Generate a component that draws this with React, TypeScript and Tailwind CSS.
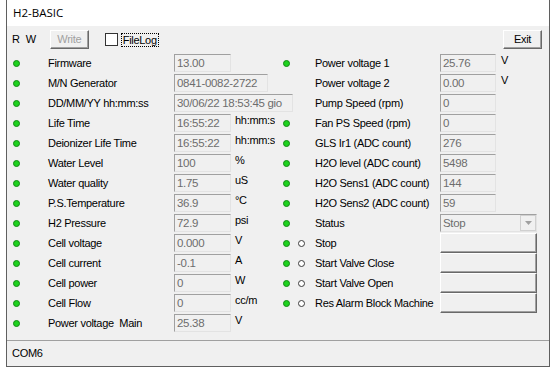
import React from 'react';

type LeftRow = { label: string; value: string; unit?: string; w?: number };
type RightRow = {
  label: string;
  value?: string;
  unit?: string;
  led?: boolean;
  hollow?: boolean;
  kind?: 'input' | 'combo' | 'button';
};

const leftRows: LeftRow[] = [
  { label: 'Firmware', value: '13.00' },
  { label: 'M/N Generator', value: '0841-0082-2722', w: 94 },
  { label: 'DD/MM/YY hh:mm:ss', value: '30/06/22 18:53:45 gio', w: 119 },
  { label: 'Life Time', value: '16:55:22', unit: 'hh:mm:ss' },
  { label: 'Deionizer Life Time', value: '16:55:22', unit: 'hh:mm:ss' },
  { label: 'Water Level', value: '100', unit: '%' },
  { label: 'Water quality', value: '1.75', unit: 'uS' },
  { label: 'P.S.Temperature', value: '36.9', unit: '°C' },
  { label: 'H2 Pressure', value: '72.9', unit: 'psi' },
  { label: 'Cell voltage', value: '0.000', unit: 'V' },
  { label: 'Cell current', value: '-0.1', unit: 'A' },
  { label: 'Cell power', value: '0', unit: 'W' },
  { label: 'Cell Flow', value: '0', unit: 'cc/m' },
  { label: 'Power voltage  Main', value: '25.38', unit: 'V' },
];

const rightRows: (RightRow | null)[] = [
  { label: 'Power voltage 1', value: '25.76', unit: 'V', led: true },
  { label: 'Power voltage 2', value: '0.00', unit: 'V', led: true },
  { label: 'Pump Speed (rpm)', value: '0' },
  { label: 'Fan PS Speed (rpm)', value: '0', led: true },
  { label: 'GLS Ir1 (ADC count)', value: '276', led: true },
  { label: 'H2O level (ADC count)', value: '5498', led: true },
  { label: 'H2O Sens1 (ADC count)', value: '144', led: true },
  { label: 'H2O Sens2 (ADC count)', value: '59', led: true },
  { label: 'Status', value: 'Stop', led: true, kind: 'combo' },
  { label: 'Stop', led: true, hollow: true, kind: 'button' },
  { label: 'Start Valve Close', led: true, hollow: true, kind: 'button' },
  { label: 'Start Valve Open', led: true, hollow: true, kind: 'button' },
  { label: 'Res Alarm Block Machine', led: true, hollow: true, kind: 'button' },
  null,
];

const raised =
  'border border-t-white border-l-white border-r-[#696969] border-b-[#696969] shadow-[inset_-1px_-1px_#a0a0a0] bg-[#f0f0f0]';
const sunken =
  'border border-t-[#a0a0a0] border-l-[#a0a0a0] border-r-[#e3e3e3] border-b-[#e3e3e3] bg-[#f0f0f0]';

function Led() {
  return <div className="w-[7px] h-[7px] rounded-full bg-[#1ed21e] border border-[#128a12]" />;
}

function Hollow() {
  return <div className="w-[7px] h-[7px] rounded-full bg-white border border-[#3c3c3c]" />;
}

function Field({ value, w }: { value: string; w: number }) {
  return (
    <div
      className={`${sunken} h-[18px] pl-[2px] text-[#6d6d6d] text-[11.5px] leading-[17px] whitespace-nowrap overflow-hidden shrink-0`}
      style={{ width: w }}
    >
      {value}
    </div>
  );
}

export default function App() {
  return (
    <div className="w-[554px] h-[368px] bg-white font-['Liberation_Sans',Arial,sans-serif] text-[11px] text-black tracking-[-0.3px]">
      <div className="ml-[6px] w-[544px] h-[367px] border-l border-r border-b border-[#5f5f5f] flex flex-col">
        {/* title */}
        <div className="h-[26px] bg-white flex items-center pl-[6px] text-[11.5px] tracking-normal font-['Open_Sans',sans-serif]">
          H2-BASIC
        </div>

        <div className="flex-1 bg-[#f0f0f0] flex flex-col">
          {/* toolbar */}
          <div className="h-[19px] mt-[4px] flex items-center">
            <span className="ml-[5px]">R</span>
            <span className="ml-[6px]">W</span>
            <div className={`${raised} ml-[14px] w-[39px] h-[19px] flex items-center justify-center text-[#a0a0a0]`}>
              Write
            </div>
            <div className="ml-[16px] w-[13px] h-[13px] bg-white border border-[#333]" />
            <span className="ml-[3px] px-[1px] border border-dotted border-black leading-[12px]">FileLog</span>
            <div className="flex-1" />
            <div className={`${raised} mr-[7px] w-[39px] h-[19px] flex items-center justify-center`}>Exit</div>
          </div>

          {/* rows */}
          <div className="mt-[5px] flex flex-col">
            {leftRows.map((l, i) => {
              const r = rightRows[i];
              const iw = l.w ?? 57;
              const leftW = 41 + 126 + iw + (l.w ? 0 : 44);
              return (
                <div key={i} className="h-[20px] flex items-start">
                  <div className="w-[41px] h-[18px] flex items-center pl-[6px] shrink-0">
                    <Led />
                  </div>
                  <div className="w-[126px] h-[18px] flex items-center whitespace-pre shrink-0">{l.label}</div>
                  <Field value={l.value} w={iw} />
                  {!l.w && (
                    <div className="w-[44px] pl-[4px] leading-[12px] whitespace-nowrap overflow-hidden shrink-0">
                      {l.unit}
                    </div>
                  )}
                  {r && (
                    <>
                      <div
                        className="h-[18px] flex items-center shrink-0 overflow-hidden"
                        style={{ width: 308 - leftW }}
                      >
                        {!l.w && (
                          <>
                            <div className="ml-[8px] w-[7px]">{r.led && <Led />}</div>
                            <div className="ml-[8px] w-[7px]">{r.hollow && <Hollow />}</div>
                          </>
                        )}
                      </div>
                      <div className="w-[125px] h-[18px] flex items-center whitespace-nowrap shrink-0">{r.label}</div>
                      {(!r.kind || r.kind === 'input') && <Field value={r.value ?? ''} w={56} />}
                      {r.kind === 'combo' && (
                        <div className={`${sunken} h-[18px] w-[97px] flex`}>
                          <div className="flex-1 pl-[2px] text-[#6d6d6d] text-[11.5px] leading-[16px]">{r.value}</div>
                          <div className="w-[16px] h-[16px] bg-[#f0f0f0] border border-[#d0d0d0] flex items-center justify-center">
                            <svg width="7" height="4" viewBox="0 0 7 4">
                              <path d="M0 0h7L3.5 4z" fill="#a0a0a0" />
                            </svg>
                          </div>
                        </div>
                      )}
                      {r.kind === 'button' && <div className={`${raised} h-[20px] w-[97px] -mt-[1px]`} />}
                      {r.unit && <div className="pl-[5px] leading-[12px]">{r.unit}</div>}
                    </>
                  )}
                </div>
              );
            })}
          </div>

          <div className="flex-1" />
          {/* status bar */}
          <div className="border-t border-[#a0a0a0] h-[26px] flex items-center pl-[5px]">COM6</div>
        </div>
      </div>
    </div>
  );
}
